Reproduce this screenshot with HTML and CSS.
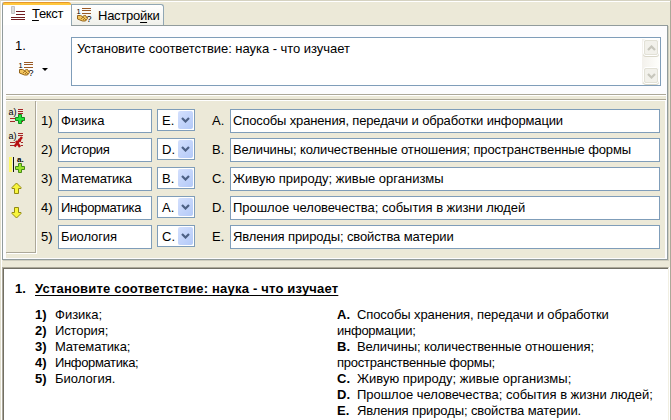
FILE: index.html
```
<!DOCTYPE html>
<html lang="ru">
<head>
<meta charset="utf-8">
<title>Редактор вопроса</title>
<link rel="stylesheet" href="styles.css">
</head>
<body>
<svg class="defs" width="0" height="0">
  <defs>
    <symbol id="match" viewBox="0 0 15 15" overflow="visible">
      <path d="M5 .5h9M5 2.500h9M5 5.500h9" stroke="#9a5a26" shape-rendering="crispEdges"/>
      <path d="M.5 7.500h3l2 1 2-1h1l2 3-2 2.500h-3l-5-2z" fill="#f2c45d" stroke="#94651b"/>
      <path d="M4 11l2-2 3 3M6 12l1.500-1.500" fill="none" stroke="#94651b" stroke-width=".8"/>
      <text x="-.5" y="5.500" font-size="7.500">1</text>
      <text x="9.500" y="14" font-size="9">?</text>
    </symbol>
    <symbol id="chev" viewBox="0 0 9 6"><path d="M1 1l3.500 3.500L8 1" fill="none" stroke="currentColor" stroke-width="2.200"/></symbol>
    <symbol id="arrow" viewBox="0 0 11 13"><path d="M5.500 1L10 5.500V6.500H7.500V11.500H3.500V6.500H1V5.500z" fill="#f8f53c" stroke="#928a13"/></symbol>
  </defs>
</svg>
<main class="window">
  <nav class="tabs">
    <div class="tab active">
      <svg class="tabicon" width="15" height="15" viewBox="0 0 15 15"><path d="M.5.5h3v7h-3z" fill="#ddd" stroke="#c4c4c4"/><path d="M5 5.500h9M5 8.500h9M0 11.500h14M0 13.500h14" stroke="#711c20" shape-rendering="crispEdges"/></svg>
      <span class="t-text"><u>Т</u>екст</span>
    </div>
    <div class="tab second">
      <svg class="tabicon" width="15" height="15"><use href="#match"/></svg>
      <span class="t-set">Настро<u>й</u>ки</span>
    </div>
    <div class="tabfill"></div>
  </nav>
  <section class="panel">
    <div class="question">
      <div class="qside">
        <div class="qnum">1.</div>
        <div class="qtype"><svg width="15" height="15"><use href="#match"/></svg><i class="caret"></i></div>
      </div>
      <div class="memo">
        <span class="q-text">Установите соответствие: наука - что изучает</span>
        <div class="scroll">
          <b class="sbtn up"><svg width="9" height="6"><use href="#chev"/></svg></b>
          <b class="sbtn"><svg width="9" height="6"><use href="#chev"/></svg></b>
        </div>
      </div>
    </div>
    <div class="splitter"></div>
    <div class="answers">
      <div class="tools">
        <svg width="16" height="16" viewBox="0 0 16 16"><path d="M9 1.500h5M9 3.500h5M9 5.500h5M1 10.500h5M1 13.500h5M13 13.500h1" stroke="#a52728"/><text x="-.5" y="7" font-size="9">a)</text><path d="M9.500 6.500h3v3h3v3h-3v3h-3v-3h-3v-3h3z" fill="#24e339" stroke="#118c1c"/></svg>
        <svg width="16" height="16" viewBox="0 0 16 16"><path d="M9 1.500h5M9 3.500h5M1 10.500h5M1 13.500h5M12 10.500h2M12 13.500h2" stroke="#a52728"/><text x="-.5" y="7" font-size="9">a)</text><path d="M13 5L5.500 14.500M7 9l4 6M9 8l3 1" fill="none" stroke="#b60f12" stroke-width="2.400"/></svg>
        <svg width="16" height="17" viewBox="0 0 16 17"><path d="M0 1h3v15H0z" fill="#fbf867"/><path d="M4.500 1v15" stroke="#111"/><text x="8" y="6" font-size="8" font-weight="bold">a.</text><path d="M9.500 7.500h3v3h3v3h-3v3h-3v-3h-3v-3h3z" fill="#9be52b" stroke="#478b18"/></svg>
        <svg class="arr" width="11" height="13"><use href="#arrow"/></svg>
        <svg class="arr down" width="11" height="13"><use href="#arrow"/></svg>
      </div>
      <div class="rows">
        <div class="row"><span class="num">1)</span><div class="field">Физика</div><div class="combo">E.<b><svg width="9" height="6"><use href="#chev"/></svg></b></div><span class="let">A.</span><div class="field wide snug">Способы хранения, передачи и обработки информации</div></div>
        <div class="row"><span class="num">2)</span><div class="field tight">История</div><div class="combo">D.<b><svg width="9" height="6"><use href="#chev"/></svg></b></div><span class="let">B.</span><div class="field wide near">Величины; количественные отношения; пространственные формы</div></div>
        <div class="row"><span class="num">3)</span><div class="field tight">Математика</div><div class="combo">B.<b><svg width="9" height="6"><use href="#chev"/></svg></b></div><span class="let">C.</span><div class="field wide">Живую природу; живые организмы</div></div>
        <div class="row"><span class="num">4)</span><div class="field tighter">Информатика</div><div class="combo">A.<b><svg width="9" height="6"><use href="#chev"/></svg></b></div><span class="let">D.</span><div class="field wide slight">Прошлое человечества; события в жизни людей</div></div>
        <div class="row"><span class="num">5)</span><div class="field near">Биология</div><div class="combo">C.<b><svg width="9" height="6"><use href="#chev"/></svg></b></div><span class="let">E.</span><div class="field wide near">Явления природы; свойства материи</div></div>
      </div>
    </div>
  </section>
  <section class="preview">
    <h1><span class="pn">1.</span><span class="title">Установите соответствие: наука - что изучает</span></h1>
    <div class="columns">
      <div class="left">
        <p><b>1)</b>Физика;</p><p><b>2)</b><span class="near">История;</span></p><p><b>3)</b><span class="snug">Математика;</span></p><p><b>4)</b><span class="tighter">Информатика;</span></p><p><b>5)</b>Биология.</p>
      </div>
      <div class="right">
        <p><b>A.</b><span class="near">Способы хранения, передачи и обработки</span><br><span class="tight">информации;</span></p>
        <p><b>B.</b><span class="near">Величины; количественные отношения;</span><br><span class="tight">пространственные формы;</span></p>
        <p><b>C.</b>Живую природу; живые организмы;</p>
        <p><b>D.</b><span class="slight">Прошлое человечества; события в жизни людей;</span></p>
        <p><b>E.</b><span class="near">Явления природы; свойства материи.</span></p>
      </div>
    </div>
  </section>
</main>
</body>
</html>
```
FILE: styles.css
```
* { box-sizing: border-box; }
html, body { margin: 0; height: 420px; overflow: hidden; }
body { font: 13px/16px "Liberation Sans", Arial, sans-serif; color: #000; background: #ece9d8; }
.defs { position: absolute; }
svg { display: block; flex: none; overflow: visible; }
.window { width: 671px; height: 420px; padding: 1px 2px 0 1px; border-top: 1px solid #d5d2c1; border-right: 1px solid #aca899; border-left: 1px solid #e2dfce; box-shadow: inset 1px 1px #fff; display: flex; flex-direction: column; }
.tabs { display: flex; height: 23px; align-items: flex-end; width: 666px; }
.tab { display: flex; }
.active { width: 69px; height: 23px; border-left: 1px solid #919b9c; border-top: 1px solid #e5972d; border-radius: 3px 3px 0 0; background: linear-gradient(#ffc73c 2px, #fff 2px); padding: 3px 0 0 8px; }
.active span { margin: 0 0 0 6px; line-height: 16px; }
.second { width: 93px; height: 21px; border: 1px solid #91a7b4; border-bottom: 0; border-radius: 0 3px 0 0; background: linear-gradient(#fff, #f0f0ea); padding: 3px 0 0 5px; }
.second span { margin: 0 0 0 6px; }
.t-text { letter-spacing: -.35px; }
.t-set { letter-spacing: -.25px; }
.slight, .q-text { letter-spacing: -.04px; }
.near { letter-spacing: -.11px; }
.snug { letter-spacing: -.15px; }
.tight { letter-spacing: -.25px; }
.tighter { letter-spacing: -.36px; }
.tabfill { flex: 1; }
u { text-underline-offset: 2px; text-decoration-thickness: 1px; text-decoration-skip-ink: none; }
.panel { width: 666px; height: 235px; border: 1px solid #919b9c; border-top: 0; background: #fcfcfe; box-shadow: 1px 1px #d0cebf; padding: 0 2px 1px 3px; }
.question { height: 69px; margin: 0 -2px 0 -3px; padding: 12px 6px 0 12px; display: flex; background: linear-gradient(90deg, transparent 68px, #919b9c 68px) top/100% 1px no-repeat; }
.qside { width: 56px; }
.qnum { height: 25px; padding-top: 1px; }
.qtype { display: flex; align-items: center; gap: 8px; padding-left: 4px; }
.caret { border: 3px solid transparent; border-top-color: #000; border-bottom: 0; }
.memo { width: 590px; height: 49px; border: 1px solid #7f9db9; background: #fff; display: flex; justify-content: space-between; padding: 1px; }
.memo span { padding: 2px 0 0 4px; }
.scroll { width: 17px; height: 45px; background: linear-gradient(90deg, #f3f1ec, #fefefb); display: flex; flex-direction: column; justify-content: space-between; }
.sbtn { width: 16px; height: 17px; margin-left: 1px; border: 1px solid #fff; outline: 1px solid #e2e1d6; outline-offset: -2px; box-shadow: 0 1px #d9d7c9; border-radius: 3px; background: #f2f1eb; color: #c7c6bc; display: grid; place-items: center; }
.up svg, .down { transform: scaleY(-1); }
.splitter { height: 7px; width: 660px; background: linear-gradient(#aca899 1px, #fff 1px 2px, #ece9d8 2px 5px, #aca899 5px 6px, #fff 6px); }
.answers { height: 157px; background: #ece9d8; display: flex; }
.tools { width: 30px; height: 152px; border-right: 1px solid #aca899; border-bottom: 1px solid #aca899; box-shadow: 1px 1px #fff; padding: 7px 0 0 3px; display: flex; flex-direction: column; gap: 8px; }
.arr { margin-left: 2px; }
.tools .down { margin-top: 3px; }
.tools svg:nth-child(4) { margin-top: 1px; }
.rows { padding: 8px 0 0 5px; display: grid; grid-auto-rows: 24px; gap: 5px; align-content: start; }
.row { display: flex; }
.num { width: 17px; padding-top: 4px; }
.field { width: 94px; height: 24px; padding: 3px 2px; border: 1px solid #7f9db9; background: #fff; white-space: nowrap; }
.combo { width: 38px; height: 22px; margin-left: 5px; padding: 3px 0 0 4px; border: 1px solid #7f9db9; background: #fff; display: flex; justify-content: space-between; }
.combo b { width: 15px; height: 18px; margin: -2px 1px 0 0; border-radius: 2px; background: linear-gradient(135deg, #d4e0fd, #b3c9f8); color: #4d6185; display: grid; place-items: center; }
.let { width: 18px; margin-left: 17px; padding-top: 4px; }
.wide { width: 430px; }
.preview { width: 667px; flex: 1; margin-top: 7px; border: 1px solid #aca899; border-right: 1px solid #f1efe2; border-bottom: 0; box-shadow: inset 1px 1px #716f64, 1px 0 #fff; background: #fff; padding: 13px 0 0 12px; }
h1 { margin: 0; display: flex; font-size: 13px; line-height: 16px; }
.pn { width: 20px; }
.title { letter-spacing: .2px; text-decoration: underline; text-decoration-thickness: 1px; text-underline-offset: 2px; text-decoration-skip-ink: none; }
.columns { display: flex; margin: 10px 0 0 20px; }
.left { width: 302px; }
p { margin: 0; white-space: nowrap; }
p b { display: inline-block; width: 20px; }
```
